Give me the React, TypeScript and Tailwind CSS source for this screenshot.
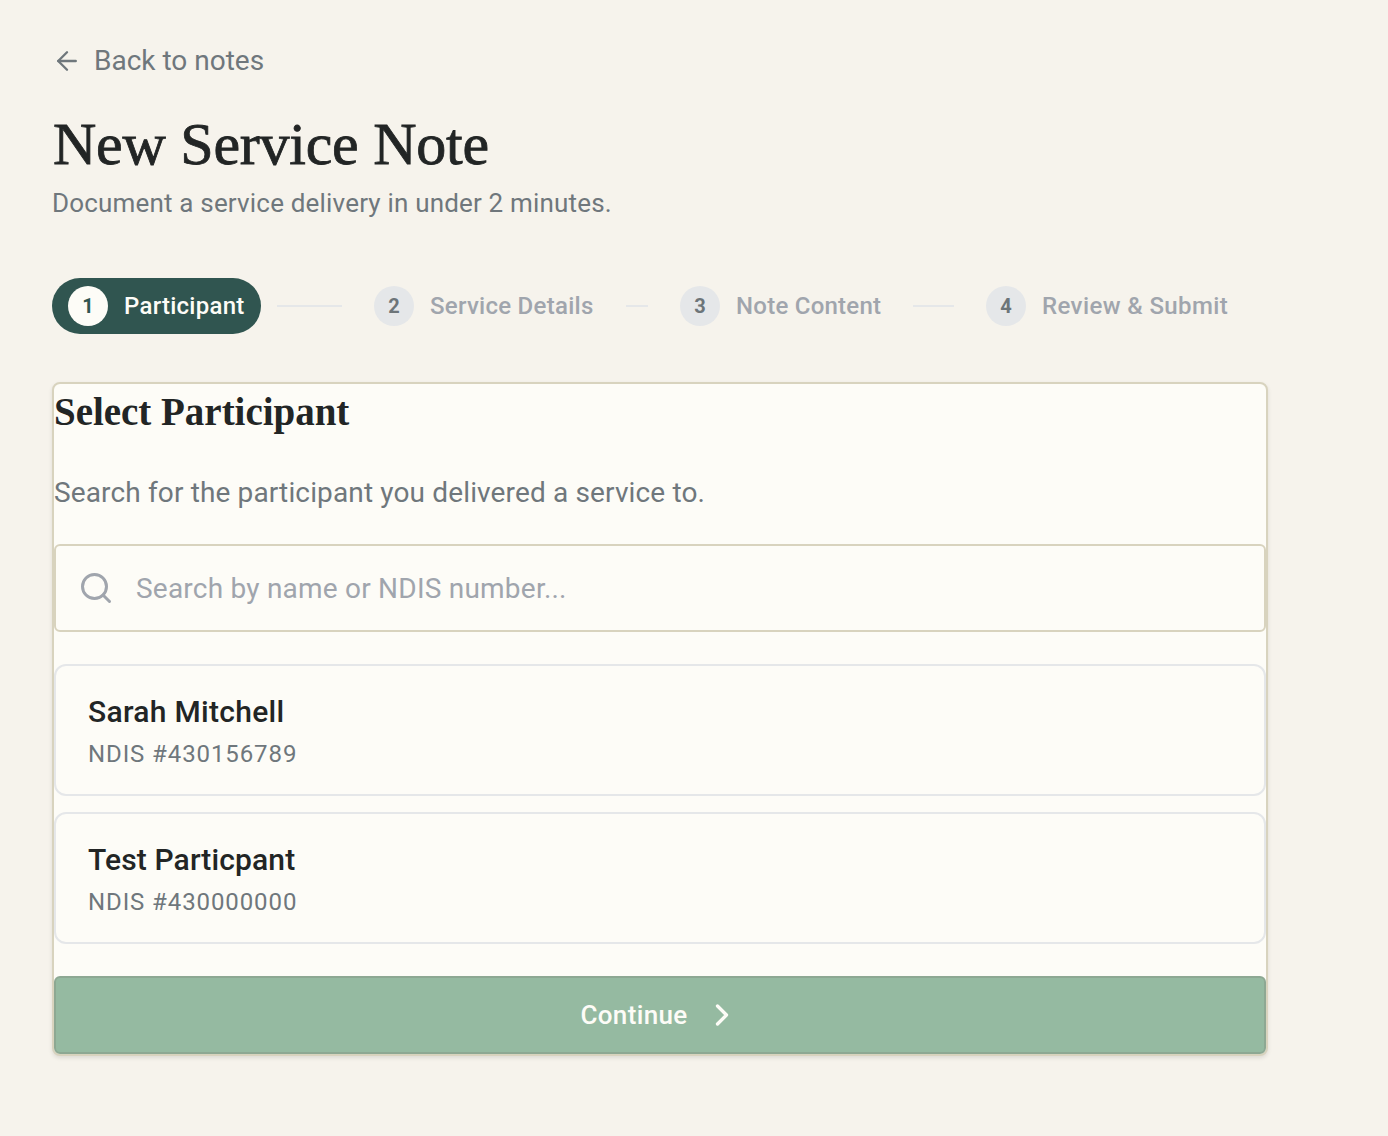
import { useState } from "react";
import clsx from "clsx";
import { ArrowLeft, ChevronRight, Search } from "lucide-react";

const SERIF = "font-['Liberation_Serif',serif]";

interface Step {
  label: string;
  width: string;
  tracking: string;
}

const STEPS: Step[] = [
  { label: "Participant", width: "w-[209px]", tracking: "tracking-[0.25px]" },
  { label: "Service Details", width: "w-[252px]", tracking: "tracking-[0.27px]" },
  { label: "Note Content", width: "w-[233px]", tracking: "tracking-[0.25px]" },
  { label: "Review & Submit", width: "w-[274px]", tracking: "tracking-[0.4px]" },
];

const PARTICIPANTS = [
  { name: "Sarah Mitchell", ndis: "430156789", tracking: "tracking-[0.3px]" },
  { name: "Test Particpant", ndis: "430000000", tracking: "tracking-[0.13px]" },
];

function StepBar({ current }: { current: number }) {
  return (
    <div className="mt-[58px] flex h-14">
      {STEPS.map((step, i) => (
        <div
          key={step.label}
          className={clsx("flex items-center", i < STEPS.length - 1 && "w-[306px]")}
        >
          <div
            className={clsx(
              "flex h-14 shrink-0 items-center gap-4 rounded-full px-4",
              step.width,
              i === current ? "bg-[#305550] text-[#fdfcf7]" : "text-[#a0a5ad]"
            )}
          >
            <span
              className={clsx(
                "flex size-10 shrink-0 items-center justify-center rounded-full text-[20px] font-bold",
                i === current ? "bg-[#fdfcf7] text-[#305550]" : "bg-[#e5e7e9] text-[#6d7579]"
              )}
            >
              {i + 1}
            </span>
            <span className={clsx("text-[24px] font-medium whitespace-nowrap", step.tracking)}>
              {step.label}
            </span>
          </div>
          {i < STEPS.length - 1 && <div className="mx-4 h-0.5 flex-1 bg-[#e5e7e9]" />}
        </div>
      ))}
    </div>
  );
}

export default function App() {
  const [query, setQuery] = useState("");

  return (
    <div className="min-h-screen bg-[#f6f3ec] px-[52px] pt-[41px] font-['Roboto',sans-serif] text-[#222525]">
      <div className="w-[1216px]">
        <a className="flex h-10 items-center gap-3 text-[28px] text-[#6f777c]">
          <ArrowLeft className="size-[30px]" strokeWidth={1.9} />
          <span>Back to notes</span>
        </a>

        <h1
          className={clsx(
            SERIF,
            "mt-[28px] h-[71px] pl-px text-[60px] leading-[70px] tracking-[-0.25px] [-webkit-text-stroke:0.8px_#222525]"
          )}
        >
          New Service Note
        </h1>
        <p className="mt-[6px] h-[34px] text-[26px] leading-[34px] tracking-[0.18px] text-[#6f777c]">
          Document a service delivery in under 2 minutes.
        </p>

        <StepBar current={0} />

        <div className="mt-12 rounded-lg border-2 border-[#d8d3be] bg-[#fdfcf7] shadow-[0_2px_4px_rgba(0,0,0,0.1)]">
          <h2 className={clsx(SERIF, "h-14 text-[39px] leading-14 font-bold tracking-[-0.02px]")}>
            Select Participant
          </h2>
          <p className="mt-[33px] h-10 text-[28px] leading-10 tracking-[0.14px] text-[#6f777c]">
            Search for the participant you delivered a service to.
          </p>

          <label className="mt-[31px] flex h-[88px] items-center gap-[22px] rounded-md border-2 border-[#d8d3be] px-[22px]">
            <Search className="size-9 shrink-0 text-[#a0a5ad]" strokeWidth={2} />
            <input
              value={query}
              onChange={(e) => setQuery(e.target.value)}
              placeholder="Search by name or NDIS number..."
              className="flex-1 pt-0.5 text-[28px] tracking-[0.22px] outline-none placeholder:text-[#a0a5ad]"
            />
          </label>

          <div className="mt-8 flex flex-col gap-4">
            {PARTICIPANTS.map((p) => (
              <button
                key={p.ndis}
                className="flex h-[132px] flex-col items-start rounded-xl border-2 border-[#e5e7e9] px-8 pt-6 text-left"
              >
                <span className={clsx("text-[30px] leading-[44px] font-medium", p.tracking)}>
                  {p.name}
                </span>
                <span className="text-[24px] leading-[40px] tracking-[0.9px] text-[#6f777c]">
                  NDIS #{p.ndis}
                </span>
              </button>
            ))}
          </div>

          <button className="mt-8 flex h-[78px] w-full items-center justify-center gap-4 rounded-md border-2 border-[#8da893] bg-[#95baa1] text-[26px] font-medium text-[#fdfcf7]">
            <span className="tracking-[0.35px]">Continue</span>
            <ChevronRight className="size-9" strokeWidth={2.2} />
          </button>
        </div>
      </div>
    </div>
  );
}
